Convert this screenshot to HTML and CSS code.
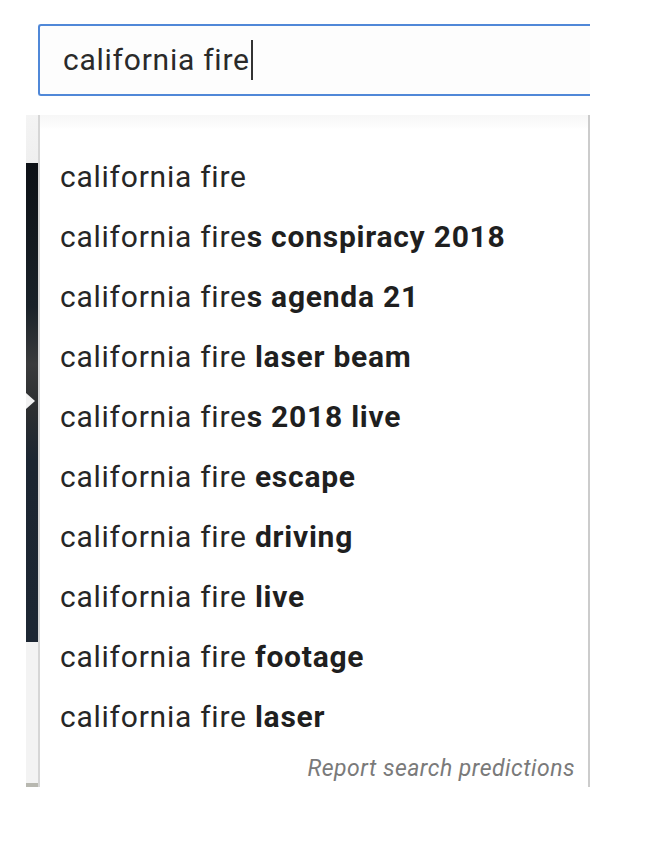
FILE: index.html
```html
<!DOCTYPE html>
<html>
<head>
<meta charset="utf-8">
<link rel="stylesheet" href="styles.css">
</head>
<body>
<div class="page">
  <div class="search">
    <span class="query">california fire</span><span class="caret"></span>
  </div>
  <div class="dropdown">
    <div class="thumb">
      <div class="thumb-top"></div>
      <div class="thumb-img">
        <div class="arrow"></div>
      </div>
      <div class="thumb-bottom"></div>
    </div>
    <div class="panel">
      <ul class="list">
        <li>california fire</li>
        <li>california fire<b>s conspiracy 2018</b></li>
        <li>california fire<b>s agenda 21</b></li>
        <li>california fire <b>laser beam</b></li>
        <li>california fire<b>s 2018 live</b></li>
        <li>california fire <b>escape</b></li>
        <li>california fire <b>driving</b></li>
        <li>california fire <b>live</b></li>
        <li>california fire <b>footage</b></li>
        <li>california fire <b>laser</b></li>
      </ul>
      <div class="report">Report search predictions</div>
    </div>
  </div>
</div>
</body>
</html>
```
FILE: styles.css
```css
html, body {
  margin: 0;
  padding: 0;
  background: #ffffff;
}
.page {
  padding-top: 24px;
  font-family: Roboto, "Liberation Sans", sans-serif;
  color: #222222;
}
.search {
  margin-left: 38px;
  width: 552px;
  height: 72px;
  box-sizing: border-box;
  border: 2px solid #5088d8;
  border-right: none;
  border-radius: 3px 0 0 3px;
  background: #fdfdfd;
  display: flex;
  align-items: center;
  padding-left: 23px;
  padding-bottom: 1px;
}
.query {
  font-size: 30px;
  letter-spacing: 0.75px;
  color: #2a2a2a;
  line-height: 1;
}
.caret {
  display: inline-block;
  width: 2px;
  height: 40px;
  background: #333;
  margin-left: 1px;
}
.dropdown {
  margin-top: 19px;
  margin-left: 26px;
  display: flex;
  height: 672px;
}
.thumb {
  width: 12px;
  display: flex;
  flex-direction: column;
}
.thumb-top {
  height: 48px;
  background: linear-gradient(#f4f4f4, #efefef);
}
.thumb-img {
  height: 479px;
  position: relative;
  background: linear-gradient(#0d1116 0%, #1a2229 30%, #3a3b3c 42%, #2c2e30 52%, #1c2632 62%, #1d2733 100%);
}
.arrow {
  position: absolute;
  left: 0;
  top: 230px;
  width: 0;
  height: 0;
  border-top: 8px solid transparent;
  border-bottom: 8px solid transparent;
  border-left: 9px solid #f2f2f2;
}
.thumb-bottom {
  flex: 1;
  background: #f3f3f3;
  border-bottom: 4px solid #b8b8b0;
}
.panel {
  width: 552px;
  box-sizing: border-box;
  border-left: 2px solid #d6d6d6;
  border-right: 2px solid #cccccc;
  background: linear-gradient(#f7f7f7 0px, #fdfdfd 12px, #ffffff 14px);
  display: flex;
  flex-direction: column;
}
.list {
  list-style: none;
  margin: 0;
  padding: 32px 0 0 0;
}
.list li {
  height: 60px;
  line-height: 60px;
  padding-left: 20px;
  font-size: 30px;
  letter-spacing: 0.75px;
  color: #262626;
  white-space: nowrap;
}
.list b {
  font-weight: 700;
  color: #1f1f1f;
}
.report {
  text-align: right;
  padding-right: 13px;
  font-size: 23px;
  letter-spacing: 0.5px;
  font-style: italic;
  color: #7a7a7a;
  line-height: 1;
  margin-top: 10px;
}
```
